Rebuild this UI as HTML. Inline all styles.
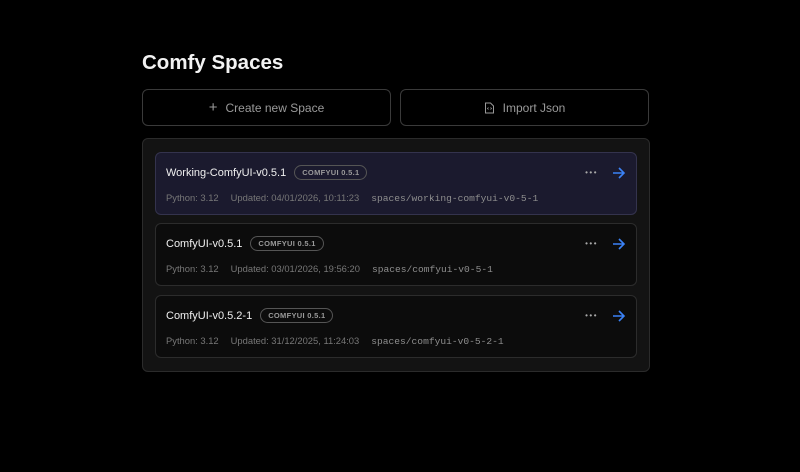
<!DOCTYPE html>
<html><head><meta charset="utf-8"><style>
*{box-sizing:border-box;margin:0;padding:0}
body{width:800px;height:472px;background:#000;font-family:"Liberation Sans",sans-serif;position:relative;overflow:hidden;color:#fff}
h1{position:absolute;left:142px;top:51px;font-size:20.5px;font-weight:bold;color:#f2f2f2}
.btn{position:absolute;top:89px;height:37px;width:249px;border:1px solid #3a3a3a;border-radius:6px;display:flex;align-items:center;justify-content:center;color:#9a9a9a;font-size:12px;gap:8px}
.panel{position:absolute;left:142px;top:138px;width:508px;height:234px;background:#131313;border:1px solid #2b2b2b;border-radius:6px}
.card{position:absolute;left:12px;width:482px;height:63px;border:1px solid #2c2c2c;border-radius:6px;background:#0c0c0c}
.card.a{background:#1b1a2e;border-color:#34334d}
.name{position:absolute;left:10px;top:12px;font-size:11px;color:#f0f0f0;display:flex;align-items:center;gap:8px}
.tag{font-size:7.5px;font-weight:bold;color:#9a9a9a;border:1px solid #555;border-radius:8px;padding:2px 7px;letter-spacing:.3px}
.meta{position:absolute;left:10px;top:39px;font-size:9.4px;color:#777;white-space:nowrap}
.meta span{margin-right:12px}
.mono{font-family:"Liberation Mono","DejaVu Sans Mono",monospace;color:#8e8e8e;font-size:9.6px}
.dots{position:absolute;right:38px;top:15px;color:#aaa;font-size:8px;letter-spacing:1.5px}
.arr{position:absolute;right:10px;top:13px}
</style></head><body>
<h1>Comfy Spaces</h1>
<div class="btn" style="left:142px"><span style="font-size:15px">+</span><span>Create new Space</span></div>
<div class="btn" style="left:400px"><svg width="11" height="12" viewBox="0 0 11 12"><path d="M1.5 1h5l3 3v7h-8z" fill="none" stroke="#999" stroke-width="1"/><path d="M4.5 5.5l-1 1 1 1M6.5 5.5l1 1-1 1" fill="none" stroke="#999" stroke-width=".8"/></svg><span>Import Json</span></div>
<div class="panel">
<div class="card a" style="top:13px"><div class="name">Working-ComfyUI-v0.5.1<span class="tag">COMFYUI 0.5.1</span></div><div class="meta"><span>Python: 3.12</span><span>Updated: 04/01/2026, 10:11:23</span><span class="mono">spaces/working-comfyui-v0-5-1</span></div><div class="dots">•••</div><svg class="arr" width="14" height="14" viewBox="0 0 14 14"><path d="M1 7h11M7 2l5 5-5 5" fill="none" stroke="#3b82f6" stroke-width="1.6"/></svg></div>
<div class="card" style="top:84px"><div class="name">ComfyUI-v0.5.1<span class="tag">COMFYUI 0.5.1</span></div><div class="meta"><span>Python: 3.12</span><span>Updated: 03/01/2026, 19:56:20</span><span class="mono">spaces/comfyui-v0-5-1</span></div><div class="dots">•••</div><svg class="arr" width="14" height="14" viewBox="0 0 14 14"><path d="M1 7h11M7 2l5 5-5 5" fill="none" stroke="#3b82f6" stroke-width="1.6"/></svg></div>
<div class="card" style="top:156px"><div class="name">ComfyUI-v0.5.2-1<span class="tag">COMFYUI 0.5.1</span></div><div class="meta"><span>Python: 3.12</span><span>Updated: 31/12/2025, 11:24:03</span><span class="mono">spaces/comfyui-v0-5-2-1</span></div><div class="dots">•••</div><svg class="arr" width="14" height="14" viewBox="0 0 14 14"><path d="M1 7h11M7 2l5 5-5 5" fill="none" stroke="#3b82f6" stroke-width="1.6"/></svg></div>
</div>
</body></html>
